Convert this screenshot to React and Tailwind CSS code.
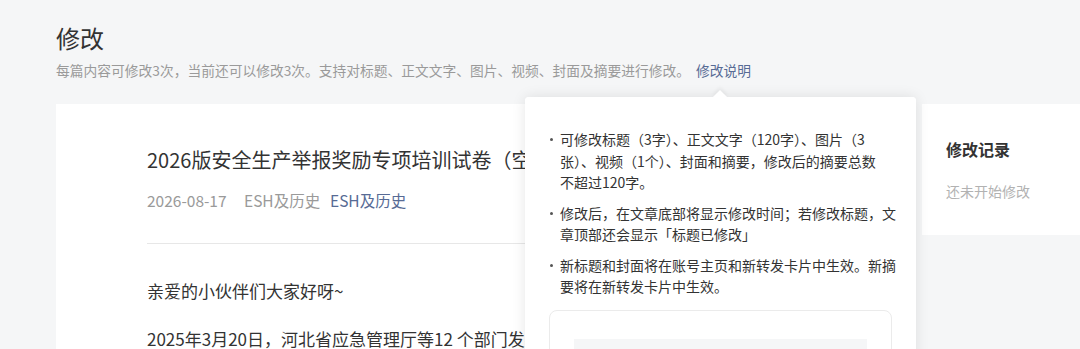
import React from 'react';

const tips = [
    ['可修改标题（3字）、正文文字（120字）、图片（3', '张）、视频（1个）、封面和摘要，修改后的摘要总数', '不超过120字。'],
    ['修改后，在文章底部将显示修改时间；若修改标题，文', '章顶部还会显示「标题已修改」'],
    ['新标题和封面将在账号主页和新转发卡片中生效。新摘', '要将在新转发卡片中生效。'],
];

const TipPopover = () => (
    <div className="absolute left-[525px] top-[97px] w-[391px] h-[300px] bg-white rounded-[4px] shadow-[0_0_14px_rgba(0,0,0,0.1)]">
        <div className="absolute left-[190px] -top-[5px] w-[10px] h-[10px] rotate-45 bg-white shadow-[-2px_-2px_4px_rgba(0,0,0,0.05)]" />
        <div className="relative bg-white rounded-[4px] px-[24px] pt-[32px]">
            {tips.map((lines, i) => (
                <div key={i} className={`flex text-[14px] leading-[21.5px] text-[#333] ${i > 0 ? 'mt-[9px]' : ''}`}>
                    <span className="w-[11px] shrink-0 pl-[1px] pt-[9px]">
                        <span className="block w-[3px] h-[3px] rounded-full bg-[#555]" />
                    </span>
                    <p className="whitespace-nowrap">
                        {lines.map((line, j) => (
                            <React.Fragment key={j}>
                                {line}
                                {j < lines.length - 1 && <br />}
                            </React.Fragment>
                        ))}
                    </p>
                </div>
            ))}
            <div className="mt-[12px] h-[80px] border border-[#ebebeb] rounded-[8px] px-[24px] pt-[28px]">
                <div className="h-[40px] bg-[#f5f6f7]" />
            </div>
        </div>
    </div>
);

const App = () => {
    return (
        <div className="relative w-full h-[349px] overflow-hidden bg-[#f5f6f7]" style={{ fontFamily: '"Noto Sans CJK SC", "Noto Sans", sans-serif' }}>
            <div className="px-[56px] pt-[22px]">
                <h1 className="text-[24px] leading-[32px] text-[#333]">修改</h1>
                <p className="mt-[5px] text-[13.75px] leading-[22px] text-[#9a9a9a] whitespace-nowrap">
                    每篇内容可修改3次，当前还可以修改3次。支持对标题、正文文字、图片、视频、封面及摘要进行修改。
                    <span className="ml-[6px] text-[#576b95]">修改说明</span>
                </p>
            </div>

            <div className="flex gap-[16px] mt-[23px] pl-[56px] w-[1200px]">
                <div className="w-[850px] h-[300px] bg-white pl-[91px] pt-[42px] overflow-hidden">
                    <h2 className="text-[20px] leading-[28px] text-[#333] whitespace-nowrap">2026版安全生产举报奖励专项培训试卷（空白卷）</h2>
                    <div className="mt-[15px] flex text-[15.5px] leading-[22px] text-[#9a9a9a]">
                        <span className="w-[97px]">2026-08-17</span>
                        <span className="w-[86px]">ESH及历史</span>
                        <span className="text-[#576b95]">ESH及历史</span>
                    </div>
                    <div className="mt-[32px] border-t border-[#e7e7e7]" />
                    <p className="mt-[33px] text-[17px] leading-[28px] text-[#333]">亲爱的小伙伴们大家好呀~</p>
                    <p className="mt-[20px] text-[17px] leading-[28px] text-[#333] whitespace-nowrap">2025年3月20日，河北省应急管理厅等12 个部门发布了《河北省安全生产举报奖励办法》</p>
                </div>
                <div className="w-[260px] h-[131px] bg-white px-[24px] pt-[33px]">
                    <h3 className="text-[16px] leading-[24px] font-bold text-[#333]">修改记录</h3>
                    <p className="mt-[19px] text-[14px] leading-[22px] text-[#b2b2b2]">还未开始修改</p>
                </div>
            </div>

            <TipPopover />
        </div>
    );
};

export default App;
